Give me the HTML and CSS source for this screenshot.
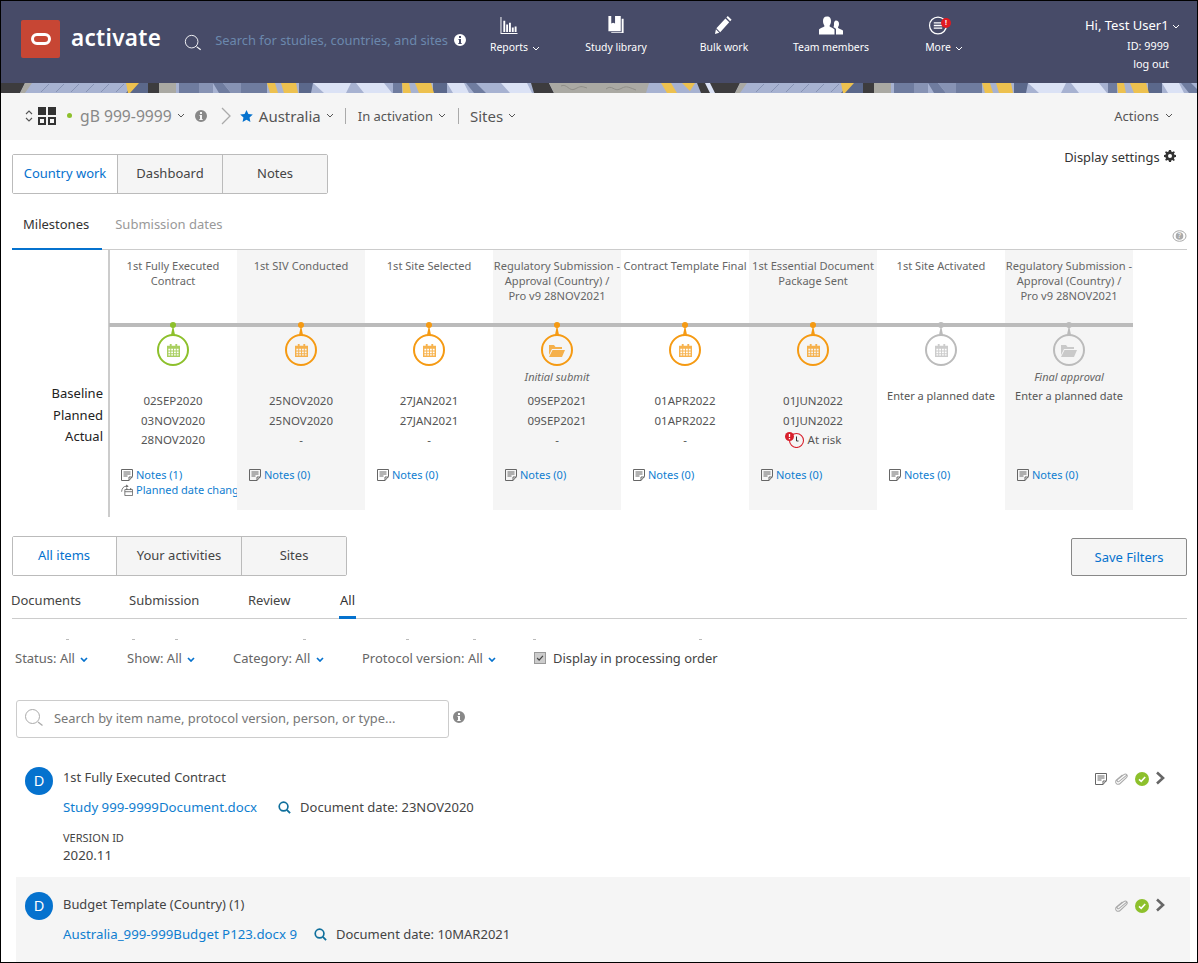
FILE: index.html
```html
<!DOCTYPE html>
<html>
<head>
  <meta charset="UTF-8" />
  <title>activate</title>
  <link rel="stylesheet" href="styles.css">
</head>
<body>
  <svg class="defs" width="0" height="0">
    <symbol id="i-search" viewBox="0 0 20 20"><circle cx="8.500" cy="8.500" r="7" fill="none" stroke="currentColor" stroke-width="1"/><path d="M14 14l4.500 3.500" stroke="currentColor" stroke-width="1.300"/></symbol>
    <symbol id="i-info" viewBox="0 0 12 12"><path fill-rule="evenodd" fill="currentColor" d="M6 0a6 6 0 1 1 0 12A6 6 0 0 1 6 0zM5 2v2h2V2zM4.500 5v1H5v3H4.300v1h3.400V9H7V5z"/></symbol>
    <symbol id="i-chev" viewBox="0 0 8 5"><path d="M1 1l3 3 3-3" fill="none" stroke="currentColor"/></symbol>
    <symbol id="i-cal" viewBox="0 0 14 14"><path fill="currentColor" fill-rule="evenodd" d="M3 0h2v2h4V0h2v2h3v12H0V2h3zM1.500 5v2h2V5zm3 0v2h2V5zm3 0v2h2V5zm3 0v2h2V5zm-9 3v2h2V8zm3 0v2h2V8zm3 0v2h2V8zm3 0v2h2V8zm-9 3v1.500h2V11zm3 0v1.500h2V11zm3 0v1.500h2V11zm3 0v1.500h2V11z"/></symbol>
    <symbol id="i-folder" viewBox="0 0 16 13"><path fill="currentColor" d="M0 1h5l1.500 2H13v2H3L0 11zM3.500 6H16l-3 7H0z"/></symbol>
    <symbol id="i-note" viewBox="0 0 12 12"><path fill="none" stroke="currentColor" d="M.5.500h11v7l-3.500 4h-7.500zM8 11.500V8h3.500"/><path stroke="currentColor" d="M2.500 3h7M2.500 5h7M2.500 7h4"/></symbol>
    <symbol id="i-clip" viewBox="0 0 16 14"><path fill="none" stroke="currentColor" stroke-width="1.100" d="M14 2.500L5.500 9.500c-1.500 1.200-3-.500-1.700-1.800L10.500 2.300c2.300-1.800 5 .8 3 3L6.500 11.800c-2.800 2.300-6.500-1-3.800-3.800L9 2.500"/></symbol>
    <symbol id="i-check" viewBox="0 0 14 14"><circle cx="7" cy="7" r="7" fill="#8dc02c"/><path d="M4 7.300l2.200 2L10.200 5" fill="none" stroke="#fff" stroke-width="1.600"/></symbol>
    <symbol id="i-next" viewBox="0 0 10 14"><path d="M2 1.500L8 7l-6 5.500" fill="none" stroke="currentColor" stroke-width="2.600"/></symbol>
    <symbol id="i-replan" viewBox="0 0 14 14"><path fill="none" stroke="currentColor" d="M4.500 6.500h9v7h-9zM4.500 9h9M.700 9C1 5 3 2.500 6.500 2.500"/><path fill="currentColor" d="M6 .500l3 2-3 2zM6 5h1.500v2H6zM10.500 5H12v2h-1.500z"/></symbol>
  </svg>

  <div class="page">
    <header class="topbar">
      <div class="logo"><i></i></div>
      <div class="brand">activate</div>
      <svg class="top-search"><use href="#i-search"/></svg>
      <div class="top-hint">Search for studies, countries, and sites</div>
      <svg class="top-info"><use href="#i-info"/></svg>
      <nav class="topnav">
        <a class="nav-reports">
          <svg viewBox="0 0 18 18"><path fill="#fff" d="M0 0h1v17h17v1H0zM3 4h2v12H3zM6 8h2v8H6zM9 6h2v10H9zM12 11h2v5h-2zM15 10h2v6h-2z"/></svg>
          <span>Reports<svg class="chev"><use href="#i-chev"/></svg></span>
        </a>
        <a class="nav-library">
          <svg viewBox="0 0 18 20"><path fill="#fff" d="M1 0h3v8l2-1 2 1V0h6v16H1zM15 3h2v15H4v-1h11z"/></svg>
          <span>Study library</span>
        </a>
        <a class="nav-bulk">
          <svg viewBox="0 0 18 20"><path fill="#fff" d="M13 0l4 4-1.500 1.500-4-4zM10.500 2.500l4 4L5 17l-4-4zM.500 14l3.500 3.500-4.500 1.500z"/></svg>
          <span>Bulk work</span>
        </a>
        <a class="nav-team">
          <svg viewBox="0 0 24 18"><path fill="#fff" d="M8 0c3 0 4 2 4 4.500S11 8 10.500 9.500c0 1 4 2 5 3.500v5H0v-5c1-1.500 5.500-2.500 5.500-3.500C5 8 4 7 4 4.500S5 0 8 0zM17 4c2 0 3 1.500 3 3.500S19 10 19 11c0 1 4 2 5 3v4h-7v-5.500c-1-1-2-1.500-2.500-2 .5-1 .5-2 .5-3.500C15 6 15.500 4 17 4z"/></svg>
          <span>Team members</span>
        </a>
        <a class="nav-more">
          <svg viewBox="0 0 18 18"><circle cx="9" cy="9" r="8" fill="none" stroke="#fff" stroke-width="1.200"/><path stroke="#fff" stroke-width="1.300" d="M5 6.500h8M5 9h8M5 11.500h8"/></svg>
          <b class="alert">!</b>
          <span>More<svg class="chev"><use href="#i-chev"/></svg></span>
        </a>
      </nav>
      <div class="user">
        <div class="user-hi">Hi, Test User1 <svg class="chev"><use href="#i-chev"/></svg></div>
        <div>ID: 9999</div>
        <div>log out</div>
      </div>
    </header>

    <svg class="banner" width="1196" height="10">
      <defs>
        <pattern id="stripes" width="715" height="10" patternUnits="userSpaceOnUse">
          <rect width="715" height="10" fill="#a7b2d1"/>
          <path stroke="#8793b4" stroke-width="1" d="M40 9l8-8M55 9l8-8M70 9l8-8M85 9l8-8M100 9l8-8M115 9l8-8"/>
          <path fill="#6f7c9f" d="M178 0h20v10h-20zM212 0h10l8 10h-12zM240 0h26v10h-26zM392 0h9v10h-9zM465 0h10l10 10h-12z"/>
          <path fill="#8793b4" d="M198 0h14v10h-14zM222 0h18v10h-10z"/>
          <path fill="#5b688b" d="M133 0h14v10h-22zM298 0h14l-2 10h-12zM432 0h14v10h-14zM148 0h1v10h-1z"/>
          <path fill="#3d3c3e" d="M0 0h24l-5 10H0zM147 0h11v10h-11zM530 0h18l5 10h-20zM696 0h19v10h-15z"/>
          <path fill="#aaa9a3" d="M24 0h7l-7 10h-5zM158 0h17v10h-17zM548 0h100l-3 10h-92z"/>
          <path fill="none" stroke="#8f8e88" d="M560 3c6-3 8 6 14 3s6-3 12-1M605 6c6-5 8 3 14 0s6-3 16 1"/>
          <path fill="#edc14f" d="M125 0h13l-9 10h-2zM266 0h8l3 10h-8zM280 0h15l2 10h-14zM401 0h7l2 10h-8zM414 0h16l3 10h-15zM660 0h10l6 10h-10zM681 0h13l-5 8z"/>
          <path fill="#dbe2f5" d="M312 0h38l-5 10h-22zM355 0h28l8 10h-28zM446 0h17l5 10h-16zM500 0h26l5 10h-22zM704 0h5l5 10h-5z"/>
        </pattern>
      </defs>
      <rect width="1196" height="10" fill="url(#stripes)"/>
    </svg>

    <div class="crumbs">
      <svg class="sort" viewBox="0 0 8 14"><path d="M1 5l3-3 3 3M1 9l3 3 3-3" fill="none" stroke="#555" stroke-width="1.100"/></svg>
      <svg class="apps" viewBox="0 0 18 18"><path fill="#333" d="M0 0h8v8H0zM10 0h8v8h-8z"/><path fill="none" stroke="#333" stroke-width="2" d="M1 11h6v6H1zM11 11h6v6h-6z"/></svg>
      <i class="dot-green"></i>
      <span class="crumb-study">gB 999-9999</span>
      <svg class="chev c-study"><use href="#i-chev"/></svg>
      <svg class="crumb-info"><use href="#i-info"/></svg>
      <svg class="crumb-gt" viewBox="0 0 10 18"><path d="M1 1l8 8-8 8" fill="none" stroke="#aaa" stroke-width="1.300"/></svg>
      <svg class="star" viewBox="0 0 20 19"><path fill="#0572ce" d="M10 0l3 6.500 7 .800-5.200 4.700 1.400 7L10 15.500 3.800 19l1.400-7L0 7.300l7-.800z"/></svg>
      <span class="crumb-lg">Australia</span>
      <svg class="chev c-aus"><use href="#i-chev"/></svg>
      <i class="crumb-sep s1"></i>
      <span class="crumb-sm">In activation</span>
      <svg class="chev c-act"><use href="#i-chev"/></svg>
      <i class="crumb-sep s2"></i>
      <span class="crumb-lg">Sites</span>
      <svg class="chev c-sites"><use href="#i-chev"/></svg>
      <span class="crumb-actions">Actions</span>
      <svg class="chev c-actions"><use href="#i-chev"/></svg>
    </div>

    <section class="country">
      <div class="tabs-row">
        <div class="boxtabs">
          <a class="on">Country work</a>
          <a>Dashboard</a>
          <a>Notes</a>
        </div>
        <div class="display-settings">Display settings
          <svg viewBox="0 0 12 12"><path fill="#333" fill-rule="evenodd" d="M5 0h2l.300 1.600 1.200.500L9.900 1.200l1 1-1 1.400.500 1.100L12 5v2l-1.600.300-.500 1.200.900 1.400-1 1-1.400-.9-1.100.500L7 12H5l-.300-1.600-1.200-.500-1.400.9-1-1 .9-1.400-.500-1.200L0 7V5l1.500-.300.500-1.100-1-1.400 1-1 1.400.9 1.100-.500zM6 4a2 2 0 1 0 0 4 2 2 0 0 0 0-4z"/></svg>
        </div>
      </div>
      <div class="linktabs">
        <a class="on">Milestones</a>
        <a>Submission dates</a>
        <svg class="help" viewBox="0 0 14 12"><ellipse cx="7" cy="6" rx="6.500" ry="5.300" fill="none" stroke="#aaa"/><circle cx="7" cy="6" r="3.800" fill="#aaa"/><text x="7" y="8.300" font-size="6.500" fill="#fff" text-anchor="middle">?</text></svg>
      </div>

      <div class="timeline">
        <div class="legend">
          <div>Baseline</div>
          <div>Planned</div>
          <div>Actual</div>
        </div>
        <div class="ms green">
          <div class="ms-head">1st Fully Executed<br>Contract</div>
          <div class="ms-rail"></div>
          <div class="ms-node"><svg><use href="#i-cal"/></svg></div>
          <div class="ms-tag"></div>
          <div class="ms-dates"><div>02SEP2020</div><div>03NOV2020</div><div>28NOV2020</div></div>
          <div class="ms-links">
            <a><svg><use href="#i-note"/></svg>Notes (1)</a>
            <a class="clip"><svg><use href="#i-replan"/></svg>Planned date change</a>
          </div>
        </div>
        <div class="ms alt">
          <div class="ms-head">1st SIV Conducted</div>
          <div class="ms-rail"></div>
          <div class="ms-node"><svg><use href="#i-cal"/></svg></div>
          <div class="ms-tag"></div>
          <div class="ms-dates"><div>25NOV2020</div><div>25NOV2020</div><div>-</div></div>
          <div class="ms-links"><a><svg><use href="#i-note"/></svg>Notes (0)</a></div>
        </div>
        <div class="ms">
          <div class="ms-head">1st Site Selected</div>
          <div class="ms-rail"></div>
          <div class="ms-node"><svg><use href="#i-cal"/></svg></div>
          <div class="ms-tag"></div>
          <div class="ms-dates"><div>27JAN2021</div><div>27JAN2021</div><div>-</div></div>
          <div class="ms-links"><a><svg><use href="#i-note"/></svg>Notes (0)</a></div>
        </div>
        <div class="ms alt">
          <div class="ms-head">Regulatory Submission -<br>Approval (Country) /<br>Pro v9 28NOV2021</div>
          <div class="ms-rail"></div>
          <div class="ms-node"><svg class="folder"><use href="#i-folder"/></svg></div>
          <div class="ms-tag">Initial submit</div>
          <div class="ms-dates"><div>09SEP2021</div><div>09SEP2021</div><div>-</div></div>
          <div class="ms-links"><a><svg><use href="#i-note"/></svg>Notes (0)</a></div>
        </div>
        <div class="ms">
          <div class="ms-head">Contract Template Final</div>
          <div class="ms-rail"></div>
          <div class="ms-node"><svg><use href="#i-cal"/></svg></div>
          <div class="ms-tag"></div>
          <div class="ms-dates"><div>01APR2022</div><div>01APR2022</div><div>-</div></div>
          <div class="ms-links"><a><svg><use href="#i-note"/></svg>Notes (0)</a></div>
        </div>
        <div class="ms alt">
          <div class="ms-head">1st Essential Document<br>Package Sent</div>
          <div class="ms-rail"></div>
          <div class="ms-node"><svg><use href="#i-cal"/></svg></div>
          <div class="ms-tag"></div>
          <div class="ms-dates">
            <div>01JUN2022</div><div>01JUN2022</div>
            <div class="risk">
              <svg viewBox="0 0 20 16"><circle cx="11.500" cy="8.500" r="7" fill="none" stroke="#d8202c" stroke-width="1.100"/><path d="M11.500 4.500v4.500h2" fill="none" stroke="#333" stroke-width="1"/><circle cx="4.500" cy="4.500" r="4.500" fill="#d8202c"/><path d="M4.500 2v3M4.500 6v1.200" stroke="#fff" stroke-width="1.300"/></svg>
              At risk
            </div>
          </div>
          <div class="ms-links"><a><svg><use href="#i-note"/></svg>Notes (0)</a></div>
        </div>
        <div class="ms idle">
          <div class="ms-head">1st Site Activated</div>
          <div class="ms-rail"></div>
          <div class="ms-node"><svg><use href="#i-cal"/></svg></div>
          <div class="ms-tag"></div>
          <div class="ms-dates empty"><div>Enter a planned date</div></div>
          <div class="ms-links"><a><svg><use href="#i-note"/></svg>Notes (0)</a></div>
        </div>
        <div class="ms idle alt">
          <div class="ms-head">Regulatory Submission -<br>Approval (Country) /<br>Pro v9 28NOV2021</div>
          <div class="ms-rail"></div>
          <div class="ms-node"><svg class="folder"><use href="#i-folder"/></svg></div>
          <div class="ms-tag">Final approval</div>
          <div class="ms-dates empty"><div>Enter a planned date</div></div>
          <div class="ms-links"><a><svg><use href="#i-note"/></svg>Notes (0)</a></div>
        </div>
      </div>
    </section>

    <section class="items">
      <div class="tabs-row items-tabs">
        <div class="boxtabs wide">
          <a class="on">All items</a>
          <a>Your activities</a>
          <a>Sites</a>
        </div>
        <button class="save">Save Filters</button>
      </div>
      <div class="subtabs">
        <a>Documents</a>
        <a>Submission</a>
        <a>Review</a>
        <a class="on">All</a>
      </div>
      <div class="specks"><i></i><i></i><i></i><i></i><i></i><i></i><i></i><i></i></div>
      <div class="filters">
        <span class="f1">Status: All <svg class="chev"><use href="#i-chev"/></svg></span>
        <span class="f2">Show: All <svg class="chev"><use href="#i-chev"/></svg></span>
        <span class="f3">Category: All <svg class="chev"><use href="#i-chev"/></svg></span>
        <span class="f4">Protocol version: All <svg class="chev"><use href="#i-chev"/></svg></span>
        <label class="order"><i class="box"><svg viewBox="0 0 12 12"><path d="M2.500 6l2.500 2.500 4.500-5" fill="none" stroke="#444" stroke-width="1.500"/></svg></i>Display in processing order</label>
      </div>
      <div class="finder">
        <div class="finder-box">
          <svg><use href="#i-search"/></svg>
          <span>Search by item name, protocol version, person, or type...</span>
        </div>
        <svg class="finder-info"><use href="#i-info"/></svg>
      </div>

      <article class="item first">
        <div class="badge">D</div>
        <div class="item-body">
          <div class="item-title">1st Fully Executed Contract</div>
          <div class="item-doc">
            <a>Study 999-9999Document.docx</a>
            <svg viewBox="0 0 14 14"><circle cx="6" cy="6" r="4.700" fill="none" stroke="#0f6f9c" stroke-width="1.800"/><path d="M9.500 9.500L13 13" stroke="#0f6f9c" stroke-width="2"/></svg>
            <span>Document date: 23NOV2020</span>
          </div>
          <div class="item-label">VERSION ID</div>
          <div class="item-ver">2020.11</div>
        </div>
        <div class="item-icons">
          <svg class="ic-note"><use href="#i-note"/></svg>
          <svg class="ic-clip"><use href="#i-clip"/></svg>
          <svg class="ic-check"><use href="#i-check"/></svg>
          <svg class="ic-next"><use href="#i-next"/></svg>
        </div>
      </article>

      <article class="item alt">
        <div class="badge">D</div>
        <div class="item-body">
          <div class="item-title">Budget Template (Country) (1)</div>
          <div class="item-doc">
            <a>Australia_999-999Budget P123.docx 9</a>
            <svg viewBox="0 0 14 14"><circle cx="6" cy="6" r="4.700" fill="none" stroke="#0f6f9c" stroke-width="1.800"/><path d="M9.500 9.500L13 13" stroke="#0f6f9c" stroke-width="2"/></svg>
            <span>Document date: 10MAR2021</span>
          </div>
        </div>
        <div class="item-icons">
          <svg class="ic-clip"><use href="#i-clip"/></svg>
          <svg class="ic-check"><use href="#i-check"/></svg>
          <svg class="ic-next"><use href="#i-next"/></svg>
        </div>
      </article>
    </section>
  </div>
</body>
</html>
```
FILE: styles.css
```css
* {
  box-sizing: border-box;
}

body {
  margin: 0;
  font-family: "Noto Sans", "Open Sans", sans-serif;
  font-size: 12px;
  color: #444;
  background: #fff;
}

.defs { position: absolute }

.page {
  width: 1198px;
  height: 963px;
  border: 1px solid #000;
  overflow: hidden;
  position: relative;
}

.chev {
  width: 8px;
  height: 5px;
  vertical-align: middle;
  color: inherit;
  stroke-width: 1;
}

/* top bar */
.topbar {
  height: 82px;
  background: #474b68;
  color: #fff;
  display: flex;
  align-items: center;
  padding-left: 20px;
  position: relative;
}

.logo {
  width: 39px;
  height: 38px;
  background: #c74634;
  border-radius: 2px;
  display: flex;
  align-items: center;
  justify-content: center;
  margin-top: -6px;
}
.logo i {
  width: 20px;
  height: 12px;
  border: 3px solid #fff;
  border-radius: 6px;
}

.brand {
  font-size: 22.500px;
  font-weight: 600;
  margin-left: 11px;
  margin-top: -9px;
  letter-spacing: .3px;
}

.top-search {
  width: 18px;
  height: 18px;
  margin: 2px 0 0 23px;
}

.top-hint {
  color: #6b88ad;
  font-size: 12.900px;
  margin: -5px 0 0 13px;
}

.top-info {
  width: 12px;
  height: 12px;
  margin: -5px 0 0 6px;
}

.topnav a {
  position: absolute;
  top: 15px;
  width: 110px;
  display: flex;
  flex-direction: column;
  align-items: center;
  font-size: 10.400px;
}
.topnav a > svg {
  height: 19px;
  width: 20px;
  margin-bottom: 5px;
}
.topnav span {
  position: relative;
}
.topnav span .chev {
  position: absolute;
  left: 100%;
  top: 6px;
  margin-left: 4px;
}
.nav-reports { left: 453px }
.topnav .nav-reports > svg {
  height: 17px;
  margin-top: 1px;
  margin-bottom: 6px;
}
.nav-library { left: 560px }
.nav-bulk { left: 668px }
.nav-team { left: 775px }
.topnav .nav-team > svg { width: 24px }
.nav-more { left: 882px }
.alert {
  position: absolute;
  left: 58px;
  top: 2px;
  width: 10px;
  height: 10px;
  background: #e01a22;
  border-radius: 50%;
  font-size: 7px;
  line-height: 10px;
  text-align: center;
}

.user {
  position: absolute;
  right: 28px;
  top: 15px;
  text-align: right;
  font-size: 10.800px;
  line-height: 18.500px;
}
.user-hi {
  font-size: 13px;
  margin-right: -11px;
  margin-bottom: 2px;
}

.banner {
  display: block;
}

/* breadcrumb */
.crumbs {
  height: 47px;
  background: #f5f5f5;
  display: flex;
  align-items: center;
  padding: 0 0 2px 24px;
  color: #555;
}
.sort { width: 8px; height: 14px }
.apps { width: 18px; height: 18px; margin-left: 5px }
.dot-green {
  width: 5px;
  height: 5px;
  border-radius: 50%;
  background: #8dc02c;
  margin-left: 11px;
}
.crumb-study {
  font-size: 15.700px;
  color: #888;
  margin-left: 8px;
}
.c-study { margin-left: 5px }
.crumb-info { width: 12px; height: 12px; margin-left: 10px; color: #888 }
.crumb-gt { width: 10px; height: 18px; margin-left: 14px }
.star { width: 13px; height: 12px; margin-left: 9px }
.crumb-lg { font-size: 15px; margin-left: 6px }
.crumb-sm { font-size: 13px; margin-left: 12px }
.crumb-sep { width: 1px; height: 16px; background: #aaa; margin-left: 11px }
.s2 { margin-left: 12px }
.s2 + .crumb-lg { margin-left: 11px }
.c-aus, .c-act, .c-sites { margin-left: 5px }
.crumb-actions { margin-left: auto; font-size: 13px; }
.c-actions { margin: 0 24px 0 6px }

/* box tabs */
.country { padding: 0 0 0 11px }

.tabs-row {
  display: flex;
  justify-content: space-between;
  padding-top: 14px;
}

.boxtabs {
  display: flex;
  width: 316px;
  height: 40px;
  border: 1px solid #bbb;
  border-radius: 2px;
}
.boxtabs a {
  flex: 1;
  display: flex;
  align-items: center;
  justify-content: center;
  padding-bottom: 3px;
  font-size: 13px;
  background: #f5f5f5;
  border-left: 1px solid #bbb;
}
.boxtabs a.on {
  background: #fff;
  color: #0572ce;
  border-left: 0;
}
.boxtabs.wide { width: 335px }
.boxtabs.wide a:nth-child(2) { flex: 0 0 125px }
.boxtabs.wide a:nth-child(1) { flex: 0 0 103px; padding-right: 1px }
.boxtabs.wide a:nth-child(3) { flex: 0 0 105px }

.display-settings {
  font-size: 12.900px;
  margin: -6px 21px 0 0;
  color: #333;
}
.display-settings svg { width: 12px; height: 12px; margin-left: 1px }

.linktabs {
  display: flex;
  height: 56px;
  align-items: flex-end;
  border-bottom: 1px solid #ccc;
  margin-right: 10px;
  position: relative;
  font-size: 13px;
}
.linktabs a {
  padding: 0 11px 16px;
  margin-right: 2px;
  color: #999;
}
.linktabs a.on {
  color: #333;
  padding-right: 13px;
  border-bottom: 2px solid #0572ce;
  margin-bottom: -1px;
  padding-bottom: 15px;
}
.help {
  position: absolute;
  right: 0;
  bottom: 7px;
  width: 15px;
  height: 12px;
}

/* milestones */
.timeline {
  display: flex;
  height: 267px;
  padding-left: 96px;
  position: relative;
  color: #555;
}
.timeline::before {
  content: '';
  position: absolute;
  left: 96px;
  top: 0;
  bottom: 0;
  width: 2px;
  background: #ccc;
}
.legend {
  position: absolute;
  left: 0;
  top: 133px;
  width: 91px;
  text-align: right;
  font-size: 13px;
  line-height: 21.500px;
  color: #222;
}

.ms {
  width: 128px;
  height: 260px;
  flex: none;
  text-align: center;
  color: #f59a13;
}
.ms.alt { background: #f5f5f5 }
.legend + .ms { margin-left: 1px }
.ms.green { color: #8dc02c }
.ms.idle { color: #bbb }

.ms-head {
  height: 73px;
  padding: 8px 0 0;
  font-size: 11.100px;
  line-height: 15px;
  margin: 0 -3px;
  color: #666;
}
.ms-rail {
  height: 4px;
  background: #bbb;
  position: relative;
}
.ms-rail::after {
  content: '';
  position: absolute;
  left: 61px;
  top: -1px;
  width: 6px;
  height: 6px;
  border-radius: 50%;
  background: currentColor;
}

.ms-node {
  width: 32px;
  height: 32px;
  margin: 7px auto 0;
  border: 2px solid currentColor;
  border-radius: 50%;
  position: relative;
  display: flex;
  align-items: center;
  justify-content: center;
}
.ms-node::before {
  content: '';
  position: absolute;
  left: 12px;
  top: -9px;
  width: 4px;
  height: 8px;
  background: currentColor;
  clip-path: polygon(40% 0, 60% 0, 100% 100%, 0 100%);
}
.ms-node svg { width: 13px; height: 13px; opacity: .75 }
.ms-node svg.folder { width: 16px; height: 13px }

.ms-tag {
  height: 20px;
  margin-top: 1px;
  font-style: italic;
  font-size: 11px;
  line-height: 20px;
  color: #666;
}
.ms-dates {
  height: 60px;
  padding-top: 4px;
  font-size: 11.500px;
  line-height: 19.500px;
  color: #555;
}
.ms-dates.empty {
  height: 59px;
  padding-top: 0;
  margin-top: 1px;
  font-size: 11px;
  line-height: 15px;
}
.risk {
  display: flex;
  align-items: center;
  justify-content: center;
  gap: 3px;
}
.risk svg { width: 20px; height: 16px }

.ms-links {
  margin-top: 20px;
  padding-left: 12px;
  text-align: left;
  font-size: 11px;
  line-height: 15px;
  color: #0f7ed0;
  overflow: hidden;
}
.ms-links a {
  display: flex;
  align-items: center;
  gap: 3px;
  white-space: nowrap;
}
.ms-links svg {
  width: 12px;
  height: 12px;
  color: #666;
  flex: none;
}

/* items */
.items-tabs {
  padding: 19px 10px 0 11px;
  align-items: flex-start;
}
.save {
  width: 116px;
  height: 38px;
  margin-top: 2px;
  background: #f5f5f5;
  border: 1px solid #888;
  border-radius: 2px;
  color: #0572ce;
  font: 13px "Noto Sans", sans-serif;
}

.subtabs {
  display: flex;
  height: 43px;
  margin: 0 10px 0 11px;
  padding-top: 15px;
  border-bottom: 1px solid #ccc;
  font-size: 13px;
}
.subtabs a:nth-child(1) { width: 118px; margin-left: -1px }
.subtabs a:nth-child(2) { width: 119px }
.subtabs a:nth-child(3) { width: 91px }
.subtabs a.on {
  width: 17px;
  height: 28px;
  color: #333;
  border-bottom: 3px solid #0572ce;
  text-align: center;
}

.specks {
  display: flex;
  height: 20px;
  padding: 20px 0 0 65px;
}
.specks i {
  width: 3px;
  height: 1px;
  background: #bbb;
  margin-right: 63px;
}
.specks i:nth-child(2) { margin-right: 40px }
.specks i:nth-child(3) { margin-right: 125px }
.specks i:nth-child(4) { margin-right: 100px }
.specks i:nth-child(5) { margin-right: 64px }
.specks i:nth-child(6) { margin-right: 57px }
.specks i:nth-child(7) { margin-right: 163px }

.filters {
  display: flex;
  align-items: center;
  height: 20px;
  margin-top: 9px;
  padding-left: 14px;
  font-size: 13px;
  color: #666;
}
.filters span { white-space: nowrap }
.filters .chev { color: #0572ce; margin-left: 2px; stroke-width: 1.700 }
.f1 { width: 112px }
.f2 { width: 106px }
.f3 { width: 129px }
.f4 { width: 172px }
.order {
  display: flex;
  align-items: center;
  color: #444;
  font-size: 12.900px;
}
.box {
  width: 12px;
  height: 12px;
  background: #ccc;
  border: 1px solid #999;
  margin-right: 7px;
  display: block;
}
.box svg { display: block; width: 10px; height: 10px }

.finder {
  display: flex;
  align-items: center;
  margin: 32px 0 0 15px;
}
.finder-box {
  width: 433px;
  height: 38px;
  border: 1px solid #ccc;
  border-radius: 3px;
  display: flex;
  align-items: center;
  padding: 0 0 2px 7px;
  font-size: 12.900px;
  color: #777;
}
.finder-box svg {
  width: 20px;
  height: 20px;
  color: #aaa;
  margin-right: 10px;
}
.finder-info {
  width: 12px;
  height: 12px;
  color: #888;
  margin: -4px 0 0 4px;
}

.item {
  display: flex;
  padding: 29px 0 0 24px;
  position: relative;
}
.item.first { height: 139px }
.item.alt {
  height: 85px;
  margin-left: 15px;
  width: 1174px;
  padding: 15px 0 0 9px;
  background: #f5f5f5;
}
.badge {
  width: 28px;
  height: 28px;
  flex: none;
  border-radius: 50%;
  background: #0572ce;
  color: #fff;
  text-align: center;
  font: 14px/28px "Liberation Sans", sans-serif;
}
.item-body { margin-left: 10px; font-size: 13.250px }
.item-title { line-height: 18px; margin-top: 1px; font-size: 12.900px }
.item.alt .item-title { margin-top: 3px }
.item-doc {
  display: flex;
  align-items: center;
  margin-top: 12px;
  line-height: 18px;
}
.item-doc a { color: #0f7ed0 }
.item-doc span { font-size: 13px }
.item-doc svg { width: 13px; height: 13px; margin: 0 9px 0 21px }
.item.alt .item-doc svg { margin-left: 17px }
.item-label { font-size: 11px; margin-top: 15px; line-height: 14px }
.item-ver { line-height: 18px; margin-top: 1px }

.item-icons {
  position: absolute;
  right: 32px;
  top: 34px;
  display: flex;
  align-items: center;
}
.item.alt .item-icons { right: 25px; top: 22px }
.item-icons svg { display: block }
.ic-note { width: 12px; height: 12px; color: #666; margin-right: 7px }
.ic-clip { width: 15px; height: 14px; color: #aaa; margin-right: 6px }
.ic-check { width: 14px; height: 14px; margin-right: 6px }
.ic-next { width: 10px; height: 14px; color: #666; margin-top: -3px }
```
